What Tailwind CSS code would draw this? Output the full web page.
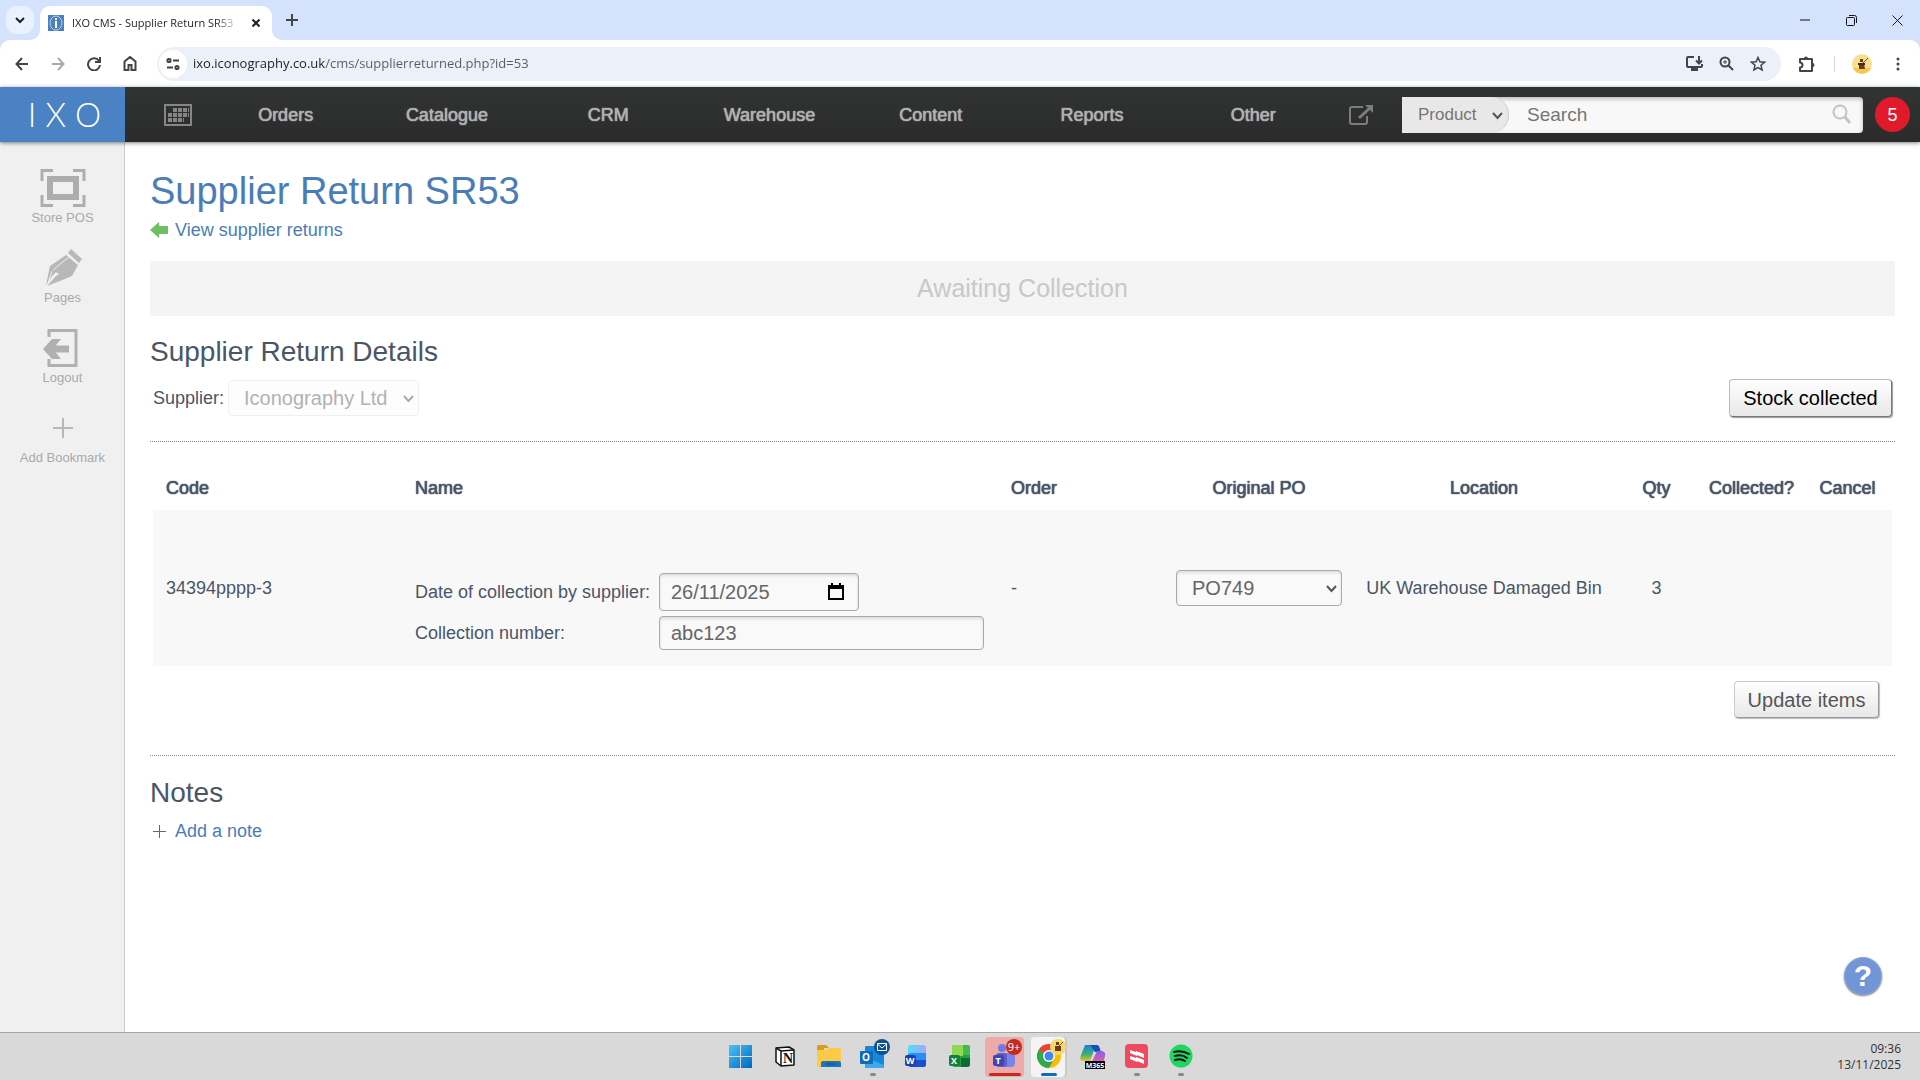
<!DOCTYPE html>
<html lang="en-GB">
<head>
    <meta charset="UTF-8">
    <meta name="viewport" content="width=device-width, initial-scale=1.0">
    <title>IXO CMS - Supplier Return SR53</title>
    <script src="https://cdn.jsdelivr.net/npm/@tailwindcss/browser@4"></script>
</head>
<body class="flex flex-col min-h-screen bg-white font-['Liberation_Sans',Arial,sans-serif] text-lg text-[#4a5568]">

    <!-- Browser window -->
    <div class="bg-[#d4e2fc] font-['Open_Sans','Noto_Sans',sans-serif] text-[#1f1f1f]">
        <!-- Tab strip -->
        <div class="flex h-10">
            <button type="button" aria-label="Search tabs" class="mt-[6px] ml-[6px] w-7 h-[28px] rounded-[10px] bg-[#e9f0fe] flex items-center justify-center">
                <svg width="10" height="7" viewBox="0 0 10 7" fill="none" stroke="#1f1f1f" stroke-width="2"><path d="M1 1l4 4 4-4"/></svg>
            </button>
            <div class="flex items-end ml-[-4px]">
                <svg width="10" height="10" viewBox="0 0 10 10" fill="#fff"><path d="M10 0v10H0A10 10 0 0 0 10 0z"/></svg>
                <div class="flex items-center w-[232px] h-[34px] rounded-t-[10px] bg-white pl-2">
                    <svg width="16" height="16" viewBox="0 0 16 16"><rect width="16" height="16" fill="#4a80bd"/><ellipse cx="8" cy="8" rx="6" ry="7" fill="none" stroke="#b9d2ee"/><rect x="7" y="6" width="2" height="7" fill="#fff"/><rect x="7" y="3" width="2" height="2" fill="#fff"/></svg>
                    <span class="ml-2 w-[168px] overflow-hidden whitespace-nowrap text-[11px] mask-r-from-85% mask-r-to-100%">IXO CMS - Supplier Return SR53</span>
                    <button type="button" aria-label="Close tab" class="flex-1 flex justify-center">
                        <svg width="8" height="8" viewBox="0 0 8 8" stroke="#1f1f1f" stroke-width="2"><path d="M0.500 0.500l7 7M7.500 0.500l-7 7"/></svg>
                    </button>
                </div>
                <svg width="10" height="10" viewBox="0 0 10 10" fill="#fff"><path d="M0 0v10h10A10 10 0 0 1 0 0z"/></svg>
            </div>
            <button type="button" aria-label="New tab" class="w-5 flex items-center justify-center">
                <svg width="12" height="12" viewBox="0 0 12 12" stroke="#444" stroke-width="2"><path d="M6 0v12M0 6h12"/></svg>
            </button>
            <div class="ml-auto flex">
                <button type="button" aria-label="Minimise" class="w-[46px] flex items-center justify-center"><svg width="10" height="10" viewBox="0 0 10 10" stroke="#111"><path d="M0 5h10"/></svg></button>
                <button type="button" aria-label="Restore" class="w-[46px] flex items-center justify-center"><svg width="11" height="11" viewBox="0 0 11 11" fill="none" stroke="#111"><rect x=".5" y="2.500" width="8" height="8" rx="1"/><path d="M3 .5h5.500a2 2 0 0 1 2 2V8"/></svg></button>
                <button type="button" aria-label="Close" class="w-[46px] flex items-center justify-center"><svg width="11" height="11" viewBox="0 0 11 11" stroke="#111"><path d="M.5.500l10 10M10.500.500l-10 10"/></svg></button>
            </div>
        </div>

        <!-- Address bar -->
        <div class="flex items-center h-[47px] bg-white rounded-t-[10px] px-1">
            <button type="button" aria-label="Back" class="w-9 flex justify-center"><svg width="14" height="14" viewBox="0 0 14 14" fill="none" stroke="#444" stroke-width="2"><path d="M13 7H2M7 1L1.500 7 7 13"/></svg></button>
            <button type="button" aria-label="Forward" class="w-9 flex justify-center"><svg width="14" height="14" viewBox="0 0 14 14" fill="none" stroke="#aaa" stroke-width="2"><path d="M1 7h11M7 1l5.500 6L7 13"/></svg></button>
            <button type="button" aria-label="Reload" class="w-9 flex justify-center"><svg width="14" height="14" viewBox="0 0 14 14" fill="none" stroke="#444" stroke-width="2"><path d="M12 4A6 6 0 1 0 13 8M13 0v5H8"/></svg></button>
            <button type="button" aria-label="Home" class="w-9 flex justify-center"><svg width="14" height="15" viewBox="0 0 14 15" fill="none" stroke="#444" stroke-width="2"><path d="M1.500 5.500L7 1l5.500 4.500V14h-4V9h-3v5h-4z"/></svg></button>
            <div class="flex-1 flex items-center ml-[9px] h-[34px] rounded-full bg-[#ebf0f9] pl-0.5 pr-[7px]">
                <button type="button" aria-label="Site information" class="w-7 h-7 rounded-full bg-white flex items-center justify-center">
                    <svg width="14" height="12" viewBox="0 0 14 12" fill="none" stroke="#444" stroke-width="2"><circle cx="3" cy="2.500" r="1.600"/><path d="M7 2.500h6M1 9.500h6"/><circle cx="11" cy="9.500" r="1.600"/></svg>
                </button>
                <input type="text" aria-label="Address" value="ixo.iconography.co.uk/cms/supplierreturned.php?id=53" class="flex-1 min-w-0 ml-[6px] text-[13px] bg-linear-to-r from-[#1f1f1f] from-[132px] to-[#5a5a5a] to-[132px] bg-clip-text text-transparent outline-none">
                <button type="button" aria-label="Install" class="w-8 flex justify-center"><svg width="17" height="15" viewBox="0 0 17 15" fill="none" stroke="#444" stroke-width="2"><path d="M8 1H2a1 1 0 0 0-1 1v8a1 1 0 0 0 1 1h13a1 1 0 0 0 1-1V8M13 0v7M10 4.500l3 3 3-3"/><path d="M5 13.500h7" stroke-width="3"/></svg></button>
                <button type="button" aria-label="Zoom" class="w-8 flex justify-center"><svg width="15" height="15" viewBox="0 0 15 15" fill="none" stroke="#444" stroke-width="2"><circle cx="6" cy="6" r="4.500"/><path d="M9 9l5 5"/><path d="M6 4v4M4 6h4" stroke-width="1"/></svg></button>
                <button type="button" aria-label="Bookmark" class="w-8 flex justify-center"><svg width="16" height="16" viewBox="0 0 16 16" fill="none" stroke="#444" stroke-width="1.500"><path d="M8 1.500l1.900 4.300 4.700.4-3.600 3.100 1.100 4.600L8 11.500l-4.100 2.400L5 9.300 1.400 6.200l4.700-.4z"/></svg></button>
            </div>
            <button type="button" aria-label="Extensions" class="ml-2 w-9 flex justify-center"><svg width="18" height="18" viewBox="0 0 18 18"><path d="M2 4h12v12H2v-3.500a2.500 2.500 0 0 0 0-5z" fill="none" stroke="#444" stroke-width="2" stroke-linejoin="round"/><path d="M6 3.500a2 2 0 0 1 4 0zM14.500 8a2 2 0 0 1 0 4z" fill="#444"/></svg></button>
            <div class="mx-[9px] w-px h-4 bg-[#c9d7ef]"></div>
            <button type="button" aria-label="Profile" class="w-9 flex justify-center"><svg width="20" height="20" viewBox="0 0 20 20"><circle cx="10" cy="10" r="10" fill="#f8e08e"/><path d="M1 14a10 10 0 0 0 18 0z" fill="#f2c94c"/><path d="M7 9h5l1 6H7zM8 5h3v3H8z" fill="#6b3b20"/><path d="M6 10h7" stroke="#4a2a15" stroke-width="2"/><path d="M11 9l5-5" stroke="#7a4a25" stroke-width="1"/></svg></button>
            <button type="button" aria-label="Menu" class="w-9 flex justify-center"><svg width="4" height="14" viewBox="0 0 4 14" fill="#444"><circle cx="2" cy="2" r="1.500"/><circle cx="2" cy="7" r="1.500"/><circle cx="2" cy="12" r="1.500"/></svg></button>
        </div>
    </div>

    <!-- CMS header -->
    <header class="flex items-center h-[55px] bg-linear-to-b from-[#303432] to-[#2b2b2b] shadow-[0_1px_4px_rgba(0,0,0,0.5)] z-10 text-[#b0b0b0]">
        <a href="#" class="w-[125px] h-full pl-1 flex items-center justify-center gap-[9px] bg-[#4b82c3] text-white font-['Lato',sans-serif] font-light text-[33px]"><span>I</span><span>X</span><span>O</span></a>
        <a href="#" aria-label="Calendar" class="w-20 flex justify-center pl-[26px]">
            <svg width="28" height="22" viewBox="0 0 28 22"><rect x="1" y="1" width="26" height="20" fill="none" stroke="#868686" stroke-width="2"/><path d="M9 6h16M4 11h21M4 16h16" stroke="#868686" stroke-width="4" stroke-dasharray="4 1"/></svg>
        </a>
        <nav class="flex-1">
            <ul class="flex text-center [text-shadow:0_0_1px_currentcolor,0_0_1px_currentcolor]">
                <li class="flex-1"><a href="#" class="hover:text-white">Orders</a></li>
                <li class="flex-1"><a href="#" class="hover:text-white">Catalogue</a></li>
                <li class="flex-1"><a href="#" class="hover:text-white">CRM</a></li>
                <li class="flex-1"><a href="#" class="hover:text-white">Warehouse</a></li>
                <li class="flex-1"><a href="#" class="hover:text-white">Content</a></li>
                <li class="flex-1"><a href="#" class="hover:text-white">Reports</a></li>
                <li class="flex-1"><a href="#" class="hover:text-white">Other</a></li>
            </ul>
        </nav>
        <a href="#" aria-label="Open website" class="w-[54px] flex justify-center">
            <svg width="26" height="22" viewBox="0 0 26 22" fill="none" stroke="#7d7d7d" stroke-width="2"><path d="M15 3H4a2 2 0 0 0-2 2v13a2 2 0 0 0 2 2h13a2 2 0 0 0 2-2v-6"/><path d="M11 14L22 4" stroke-width="3"/><path d="M17 1h8v8z" fill="#7d7d7d" stroke="none"/></svg>
        </a>
        <form class="ml-[14px] w-[461px] h-9 flex items-center rounded-sm bg-[#f8f8f8] shadow-[inset_0_2px_4px_rgba(0,0,0,0.25)] text-[#757575]">
            <div class="relative h-full">
                <select aria-label="Search type" class="appearance-none w-[107px] h-full pl-4 pt-0.5 rounded-l-sm rounded-r-full border-r border-[#c8c8c8] bg-[#e8e8e8] text-[17px]">
                    <option>Product</option>
                </select>
                <svg class="absolute right-[6px] top-[15px] pointer-events-none" width="11" height="8" viewBox="0 0 11 8" fill="none" stroke="#555" stroke-width="2"><path d="M1 1l4.500 5L10 1"/></svg>
            </div>
            <input type="text" aria-label="Search" placeholder="Search" class="flex-1 min-w-0 h-full pl-[18px] text-[19px] placeholder:text-[#757575] outline-none">
            <button type="submit" aria-label="Go" class="mr-[11px]">
                <svg width="20" height="21" viewBox="0 0 20 21" fill="none" stroke="#c4c4c4" stroke-width="2"><circle cx="8" cy="8" r="6.500"/><path d="M13 13l5 6" stroke-width="3"/></svg>
            </button>
        </form>
        <a href="#" class="ml-3 mr-[10px] w-[35px] h-[35px] rounded-full bg-[#e01a2b] text-white flex items-center justify-center">5</a>
    </header>

    <div class="flex-1 flex">
        <!-- Bookmarks -->
        <aside class="w-[125px] bg-[#f0f0f0] border-r border-[#ccc] pt-[26px] pl-px text-[13px] text-[#aaa] text-center">
            <ul class="flex flex-col gap-5">
                <li><a href="#" class="block">
                    <svg class="mx-auto" width="46" height="40" viewBox="0 0 46 40" fill="none" stroke="#adadad"><path d="M2 13V2.500h11M33 2.500h11V13M44 27v10.500H33M13 37.500H2V27" stroke-width="3"/><rect x="10" y="11" width="26" height="18" stroke-width="6"/></svg>
                    <span class="block h-5 leading-5">Store POS</span></a></li>
                <li><a href="#" class="block">
                    <svg class="mx-auto" width="40" height="40" viewBox="0 0 40 40"><path d="M25 5l3-4 11 10-3 4z" fill="#b8b8b8"/><path d="M23 7l12 10-6 11-12 5L4 38l9-10 3-2-3-2-3 3-7 10 4-19z" fill="#b8b8b8"/><path d="M27 8L10 22M9 23L5 35" stroke="#f0f0f0"/></svg>
                    <span class="block h-5 leading-5">Pages</span></a></li>
                <li><a href="#" class="block">
                    <svg class="mx-auto" width="40" height="40" viewBox="0 0 40 40" fill="none" stroke="#b0b0b0"><path d="M6 9V2.500h27v35H6V31" stroke-width="3"/><path d="M26 21H8" stroke-width="7"/><path d="M0 21l9-10h9l-8 10 8 10H9z" fill="#b0b0b0" stroke="none"/></svg>
                    <span class="block h-5 leading-5">Logout</span></a></li>
                <li><a href="#" class="block">
                    <svg class="mx-auto" width="40" height="40" viewBox="0 0 40 40" stroke="#b8b8b8" stroke-width="2"><path d="M20 10v20M10 20h20"/></svg>
                    <span class="block h-5 leading-5">Add Bookmark</span></a></li>
            </ul>
        </aside>

        <main class="relative flex-1 px-[25px] pt-[25px]">
            <h1 class="text-[38px] leading-[48px] text-[#4a7db8]">Supplier Return SR53</h1>
            <a href="#" class="flex items-center gap-[7px] h-[30px] text-[#4a7db8] hover:underline">
                <svg width="18" height="16" viewBox="0 0 18 16" fill="#6cc05f"><path d="M0 8l9-8v4h9v8H9v4z"/></svg>
                View supplier returns
            </a>

            <div class="mt-4 h-[55px] flex items-center justify-center bg-[#f4f4f4] text-[25px] text-[#c8c8c8]">Awaiting Collection</div>

            <h2 class="mt-[18px] text-[28px] leading-9">Supplier Return Details</h2>
            <div class="mt-[9px] h-[38px] flex items-center px-[3px]">
                <label for="supplier">Supplier:</label>
                <div class="relative ml-1">
                    <select id="supplier" disabled class="appearance-none w-[191px] h-9 pl-[15px] rounded-sm border border-[#f0f0f0] bg-[#fdfdfd] text-xl text-[#b2b2b2]">
                        <option>Iconography Ltd</option>
                    </select>
                    <svg class="absolute right-[5px] top-[15px] pointer-events-none" width="11" height="8" viewBox="0 0 11 8" fill="none" stroke="#aaa" stroke-width="2"><path d="M1 1l4.500 5L10 1"/></svg>
                </div>
                <button type="button" class="ml-auto w-[163px] h-[38px] rounded border border-[#bbb] border-b-[#777] border-r-[#777] bg-linear-to-b from-white to-[#e8e8e8] shadow-[1px_1px_1px_#999] text-xl text-black">Stock collected</button>
            </div>

            <hr class="mt-6 border-t border-dotted border-[#888]">

            <form>
                <div class="px-[3px] pt-6">
                    <table class="w-full table-fixed text-center">
                        <colgroup>
                            <col class="w-[249px]">
                            <col>
                            <col class="w-[165px]">
                            <col class="w-[192px]">
                            <col class="w-[258px]">
                            <col class="w-[87px]">
                            <col class="w-[103px]">
                            <col class="w-[89px]">
                        </colgroup>
                        <thead>
                            <tr class="h-11 [text-shadow:0_0_1px_currentcolor,0_0_1px_currentcolor]">
                                <th class="px-[13px] font-normal text-left">Code</th>
                                <th class="px-[13px] font-normal text-left">Name</th>
                                <th class="px-[13px] font-normal text-left">Order</th>
                                <th class="font-normal">Original PO</th>
                                <th class="font-normal">Location</th>
                                <th class="font-normal">Qty</th>
                                <th class="font-normal">Collected?</th>
                                <th class="font-normal">Cancel</th>
                            </tr>
                        </thead>
                        <tbody>
                            <tr class="bg-[#f8f8f8]">
                                <td class="px-[13px] text-left">34394pppp-3</td>
                                <td class="px-[13px] pt-[63px] pb-4 text-left">
                                    <div class="grid grid-cols-[244px_1fr] items-center gap-y-[5px]">
                                        <label for="collection-date">Date of collection by supplier:</label>
                                        <div class="relative w-[200px]">
                                            <input id="collection-date" type="text" value="26/11/2025" class="block w-full h-[38px] px-[11px] rounded-sm border border-[#aaa] bg-[#f9f9f9] shadow-[inset_0_2px_3px_#ddd] text-xl text-[#666]">
                                            <svg class="absolute right-[15px] top-[10px] pointer-events-none" width="16" height="17" viewBox="0 0 16 17"><path d="M1 3h14v13H1z" fill="none" stroke="#000" stroke-width="2"/><path d="M0 2h16v4H0zM3 0h2v3H3zM11 0h2v3h-2z"/></svg>
                                        </div>
                                        <label for="collection-number">Collection number:</label>
                                        <input id="collection-number" type="text" value="abc123" class="block w-[325px] h-[34px] px-[11px] rounded-sm border border-[#aaa] bg-[#f9f9f9] shadow-[inset_0_2px_3px_#ddd] text-xl text-[#666]">
                                    </div>
                                </td>
                                <td class="px-[13px] text-left">-</td>
                                <td class="px-[13px]">
                                    <div class="relative">
                                        <select aria-label="Original PO" class="block appearance-none w-full h-9 pl-[15px] rounded-sm border border-[#aaa] bg-[#f9f9f9] shadow-[inset_0_2px_3px_#ddd] text-xl text-[#666]">
                                            <option>PO749</option>
                                        </select>
                                        <svg class="absolute right-[5px] top-[15px] pointer-events-none" width="11" height="8" viewBox="0 0 11 8" fill="none" stroke="#555" stroke-width="2"><path d="M1 1l4.500 5L10 1"/></svg>
                                    </div>
                                </td>
                                <td>UK Warehouse Damaged Bin</td>
                                <td>3</td>
                                <td></td>
                                <td></td>
                            </tr>
                        </tbody>
                    </table>
                </div>
                <div class="flex justify-end pt-[15px] pr-4">
                    <button type="submit" class="w-[145px] h-[37px] rounded border border-[#ccc] border-b-[#999] border-r-[#999] bg-linear-to-b from-white to-[#e8e8e8] shadow-[1px_1px_1px_#bbb] text-xl text-[#555]">Update items</button>
                </div>
            </form>

            <hr class="mt-[37px] border-t border-dotted border-[#888]">

            <h2 class="mt-[19px] text-[28px] leading-9">Notes</h2>
            <a href="#" class="mt-[5px] h-[30px] pl-[3px] flex items-center gap-[9px] text-[#4a7db8] hover:underline">
                <svg width="13" height="13" viewBox="0 0 13 13" stroke="#666"><path d="M6.500 0v13M0 6.500h13"/></svg>
                Add a note
            </a>

            <!-- Floating help button -->
            <button type="button" aria-label="Help" class="absolute right-[38px] bottom-[37px] w-[38px] h-[38px] rounded-full bg-[#7195d6] border border-[#8aa6da] shadow-[0_1px_2px_#777] text-white text-[30px] leading-9 font-bold">?</button>
        </main>
    </div>

    <!-- Taskbar -->
    <footer class="h-12 bg-[#d9d9d9] border-t border-[#a5a5a5] grid grid-cols-[1fr_auto_1fr] items-center font-['Open_Sans','Noto_Sans',sans-serif]">
        <div></div>
        <div class="flex">
            <svg width="44" height="48" viewBox="0 0 44 48"><defs><linearGradient id="win" x2="1" y2="1"><stop stop-color="#4cc2f5"/><stop offset="1" stop-color="#0067c0"/></linearGradient></defs><path d="M11 12h11v11H11zM23 12h11v11H23zM11 24h11v11H11zM23 24h11v11H23z" fill="url(#win)"/></svg>
            <svg width="44" height="48" viewBox="0 0 44 48"><path d="M14 15l13-1 5 3v15l-13 1-5-4z" fill="#fff" stroke="#111" stroke-width="1.500" stroke-linejoin="round"/><path d="M14 15l5 3 13-1M19 18v15" fill="none" stroke="#111" stroke-width="1.500"/><text x="26" y="30" text-anchor="middle" font-family="Liberation Serif" font-weight="bold" font-size="14" fill="#111">N</text></svg>
            <svg width="44" height="48" viewBox="0 0 44 48"><path d="M11 13a1 1 0 0 1 1-1h8l3 3h-5v5h-7z" fill="#e09a1a"/><path d="M11 17h9l3-2h11a1 1 0 0 1 1 1v17a1 1 0 0 1-1 1H12a1 1 0 0 1-1-1z" fill="#fccb45"/><path d="M15 34v-4a2 2 0 0 1 2-2h16a2 2 0 0 1 2 2v4z" fill="#1f72bd"/><path d="M20 31h10" stroke="#0d4d8a"/></svg>
            <svg width="44" height="48" viewBox="0 0 44 48"><rect x="15" y="13" width="19" height="22" rx="1" fill="#1a86d8"/><path d="M15 24l19 8v2a1 1 0 0 1-1 1H16a1 1 0 0 1-1-1z" fill="#3ba9ea"/><rect x="10" y="18" width="13" height="13" rx="1" fill="#0f6cbd"/><text x="16" y="28" text-anchor="middle" font-weight="bold" font-size="10" fill="#fff">O</text><circle cx="32" cy="14" r="8" fill="#0b5394"/><path d="M27.500 10.500h9v7h-9zM27.500 11l4.500 4 4.500-4" fill="none" stroke="#fff"/><rect x="20" y="40" width="6" height="3" rx="1.500" fill="#888"/></svg>
            <svg width="44" height="48" viewBox="0 0 44 48"><defs><linearGradient id="word" x2="1"><stop stop-color="#4de0fa"/><stop offset="1" stop-color="#a7a4fb"/></linearGradient></defs><rect x="14" y="12" width="18" height="14" rx="3" fill="url(#word)"/><path d="M14 22q0-2 3-2h15v7H14z" fill="#2a8ff0"/><path d="M14 27h18v5a2 2 0 0 1-2 2H17a3 3 0 0 1-3-3z" fill="#1b4fcf"/><rect x="11" y="22" width="11" height="11" rx="2" fill="#1f3fb0"/><text x="16" y="31" text-anchor="middle" font-weight="bold" font-size="9" fill="#fff">W</text></svg>
            <svg width="44" height="48" viewBox="0 0 44 48"><rect x="14" y="12" width="18" height="22" rx="3" fill="#21a142"/><path d="M14 15a3 3 0 0 1 3-3h8v11H14z" fill="#8fd850"/><path d="M25 12h4a3 3 0 0 1 3 3v7h-7z" fill="#3fbb4f"/><path d="M23 25h9v6a3 3 0 0 1-3 3h-6z" fill="#0d6b36"/><rect x="11" y="22" width="11" height="11" rx="2" fill="#14803d"/><text x="16" y="31" text-anchor="middle" font-weight="bold" font-size="9" fill="#fff">X</text></svg>
            <svg width="44" height="48" viewBox="0 0 44 48"><rect x="3" y="4" width="39" height="40" rx="4" fill="#edaaa8"/><circle cx="20" cy="15" r="4" fill="#6f7be8"/><rect x="15" y="20" width="18" height="14" rx="4" fill="#7b83eb"/><rect x="14" y="20" width="11" height="14" rx="3" fill="#5b5fc7"/><rect x="11" y="22" width="11" height="11" rx="2" fill="#3f45b5"/><text x="16" y="31" text-anchor="middle" font-weight="bold" font-size="9" fill="#fff">T</text><circle cx="32" cy="14" r="8" fill="#c42b1c"/><text x="32" y="18" text-anchor="middle" font-size="11" fill="#fff">9+</text><rect x="7" y="40" width="32" height="3" rx="1.500" fill="#c42b1c"/></svg>
            <svg width="44" height="48" viewBox="0 0 44 48"><rect x="7" y="4" width="34" height="40" rx="4" fill="#c8c8c8"/><rect x="5" y="4" width="34" height="40" rx="4" fill="#f4f4f4"/><circle cx="23" cy="23" r="12" fill="#fbbc05"/><path d="M23 23L12.600 17A12 12 0 0 1 33.400 17z" fill="#ea4335"/><path d="M23 23L12.600 17A12 12 0 0 0 23 35l5-9z" fill="#2da94f"/><circle cx="23" cy="23" r="6" fill="#fff"/><circle cx="23" cy="23" r="4.500" fill="#4285f4"/><circle cx="32" cy="14" r="8" fill="#f5d76b"/><path d="M29 13h6v5h-6zM30 9h3v3h-3z" fill="#6b3b20"/><path d="M33 13l4-4" stroke="#7a4a25"/><rect x="15" y="40" width="16" height="3" rx="1.500" fill="#0f6cbd"/></svg>
            <svg width="44" height="48" viewBox="0 0 44 48"><defs><linearGradient id="cop" x2="0" y2="1"><stop stop-color="#1b7fe0"/><stop offset=".6" stop-color="#3cb371"/><stop offset="1" stop-color="#f0c020"/></linearGradient><linearGradient id="cop2" x2="0" y2="1"><stop stop-color="#8a5cf0"/><stop offset="1" stop-color="#f0609a"/></linearGradient></defs><path d="M15 12h11l-6 16h-8q-3-1-1-6z" fill="url(#cop)"/><path d="M20 12h7q2 0 3 4l1 3h-6z" fill="#1450b8"/><path d="M27 18h5q4 1 3 5l-2 8H21z" fill="url(#cop2)"/><rect x="15" y="28" width="20" height="8" fill="#000"/><text x="25" y="35" text-anchor="middle" font-weight="bold" font-size="7" fill="#fff">M365</text></svg>
            <svg width="44" height="48" viewBox="0 0 44 48"><rect x="11" y="11" width="23" height="24" rx="4" fill="#ee4b60"/><path d="M16 17l6 2v-1l8 3v4l-7-3v1l-7-3zM16 23l6 2v-1l8 3v4l-7-3v1l-7-3z" fill="#fff"/><rect x="20" y="40" width="6" height="3" rx="1.500" fill="#888"/></svg>
            <svg width="44" height="48" viewBox="0 0 44 48"><circle cx="23" cy="23" r="11.500" fill="#1ed760"/><path d="M16 19q8-2 15 2M17 23q7-2 12 2M17 27q6-2 10 1" fill="none" stroke="#111" stroke-width="2" stroke-linecap="round"/><rect x="20" y="40" width="6" height="3" rx="1.500" fill="#888"/></svg>
        </div>
        <div class="pr-[19px] text-right text-[12px] leading-4 text-[#333]">
            <div>09:36</div>
            <div>13/11/2025</div>
        </div>
    </footer>
</body>
</html>
